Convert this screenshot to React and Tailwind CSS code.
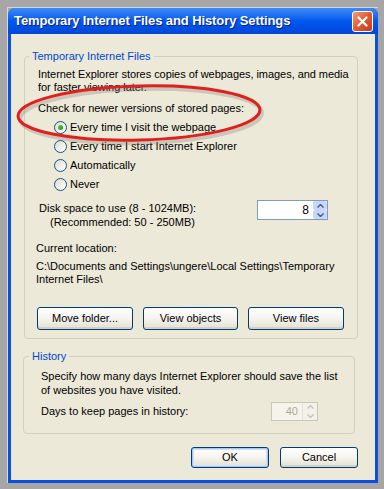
import React from 'react';

const font = { fontFamily: '"Liberation Sans", Arial, sans-serif' };

const Radio = ({ checked, label }) => (
  <div className="flex items-center h-[19px]">
    <span className="w-[13px] h-[13px] rounded-full border border-[#1c5180] bg-gradient-to-br from-[#dcdcd3] to-white flex items-center justify-center">
      {checked && <span className="w-[5px] h-[5px] rounded-full bg-gradient-to-br from-[#55d351] to-[#178f17]" />}
    </span>
    <span className="ml-[3px]">{label}</span>
  </div>
);

const Arrows = ({ disabled }) => (
  <div className={`flex flex-col w-[15px] h-full border-l ${disabled ? 'border-[#e4e2d8]' : 'border-white'}`}>
    <div className={`flex-1 flex items-center justify-center rounded-[2px] ${disabled ? 'bg-[#f2f1ea]' : 'bg-[#c6d6fc]'}`}>
      <svg width="7" height="4" viewBox="0 0 7 4">
        <path d="M0.5 3.5 L3.5 0.5 L6.5 3.5" fill="none" stroke={disabled ? '#c9c7ba' : '#4d6185'} strokeWidth="1.5" />
      </svg>
    </div>
    <div className={`flex-1 flex items-center justify-center rounded-[2px] ${disabled ? 'bg-[#f2f1ea]' : 'bg-[#c6d6fc]'}`}>
      <svg width="7" height="4" viewBox="0 0 7 4">
        <path d="M0.5 0.5 L3.5 3.5 L6.5 0.5" fill="none" stroke={disabled ? '#c9c7ba' : '#4d6185'} strokeWidth="1.5" />
      </svg>
    </div>
  </div>
);

const XpButton = ({ children, className = '', isDefault }) => (
  <button
    className={`rounded-[3px] border border-[#003c74] bg-gradient-to-b from-white via-[#f5f4ef] to-[#e3e0d2] text-black text-[11px] flex items-center justify-center ${isDefault ? 'shadow-[inset_0_0_0_1px_#a8c8f0,inset_0_0_0_2px_#d0e0f8]' : 'shadow-[inset_0_-2px_0_#d6d0c5]'} ${className}`}
  >
    {children}
  </button>
);

export default function App() {
  return (
    <div className="w-[384px] h-[489px] bg-[#a6a6a6] pt-[7px] pl-[7px] overflow-hidden" style={font}>
      <div className="w-[371px] border border-[#d6d6d6] border-r-0 border-b-0">
        <div className="relative w-[370px] rounded-t-[7px] bg-[#0a4fe0] pb-[3px]">
          {/* title bar */}
          <div className="h-[26px] flex items-center justify-between pl-[6px] pr-[5px] rounded-t-[7px] bg-gradient-to-b from-[#3d8af7] via-[#0058ee] to-[#0047d8]">
            <span className="text-white font-bold text-[13px] tracking-[-0.1px] [text-shadow:1px_1px_#0a1f7a]">
              Temporary Internet Files and History Settings
            </span>
            <div className="w-[21px] h-[21px] rounded-[3px] border border-white bg-gradient-to-br from-[#f09a7c] via-[#e05a32] to-[#c33c14] flex items-center justify-center">
              <svg width="11" height="11" viewBox="0 0 11 11">
                <path d="M1.5 1.5 L9.5 9.5 M9.5 1.5 L1.5 9.5" stroke="white" strokeWidth="2.2" strokeLinecap="round" />
              </svg>
            </div>
          </div>

          {/* body */}
          <div className="mx-[3px] bg-[#ece9d8] text-[11px] text-black whitespace-nowrap pt-[16px] pb-[12px] px-[13px]">
            <fieldset className="w-[334px] min-w-0 border border-[#d0d0bf] rounded-[4px] pl-[13px] pr-[4px] pt-[5px] pb-[8px]">
              <legend className="text-[#0046d5] leading-[13px] -ml-[9px] px-[3px]">Temporary Internet Files</legend>
              <p className="leading-[13px] tracking-[-0.05px]">
                Internet Explorer stores copies of webpages, images, and media
                <br />
                for faster viewing later.
              </p>
              <p className="leading-[13px] mt-[8px]">Check for newer versions of stored pages:</p>
              <div className="mt-[3px] ml-[16px]">
                <Radio checked label="Every time I visit the webpage" />
                <Radio label="Every time I start Internet Explorer" />
                <Radio label="Automatically" />
                <Radio label="Never" />
              </div>
              <div className="mt-[7px] flex items-start justify-between pr-[25px] pl-[1px]">
                <div className="leading-[14px]">
                  <div>Disk space to use (8 - 1024MB):</div>
                  <div className="ml-[11px]">(Recommended: 50 - 250MB)</div>
                </div>
                <div className="w-[71px] h-[20px] border border-[#7f9db9] bg-white flex mt-[-1px]">
                  <div className="flex-1 flex items-center justify-end pr-[3px] text-[12px]">8</div>
                  <Arrows />
                </div>
              </div>
              <p className="leading-[13px] mt-[13px] -ml-[2px]">Current location:</p>
              <p className="leading-[13px] mt-[5px] -ml-[2px]">
                C:\Documents and Settings\ungere\Local Settings\Temporary
                <br />
                Internet Files\
              </p>
              <div className="flex gap-[10px] mt-[21px] -ml-[1px]">
                <XpButton className="w-[96px] h-[23px]">Move folder...</XpButton>
                <XpButton className="w-[95px] h-[23px]">View objects</XpButton>
                <XpButton className="w-[96px] h-[23px]">View files</XpButton>
              </div>
            </fieldset>

            <fieldset className="w-[332px] min-w-0 -ml-[1px] mt-[11px] border border-[#d0d0bf] rounded-[4px] pl-[17px] pr-[4px] pt-[6px] pb-[12px]">
              <legend className="text-[#0046d5] leading-[13px] -ml-[12px] px-[3px]">History</legend>
              <p className="leading-[14px]">
                Specify how many days Internet Explorer should save the list
                <br />
                of websites you have visited.
              </p>
              <div className="flex items-center justify-between mt-[5px] pr-[32px]">
                <span>Days to keep pages in history:</span>
                <div className="w-[47px] h-[19px] border border-[#c9c7ba] bg-[#f5f4ea] flex">
                  <div className="flex-1 flex items-center justify-end pr-[4px] text-[11px] text-[#aca899]">40</div>
                  <Arrows disabled />
                </div>
              </div>
            </fieldset>

            <div className="flex justify-end gap-[11px] mt-[13px] pr-[4px]">
              <XpButton isDefault className="w-[78px] h-[21px]">OK</XpButton>
              <XpButton className="w-[78px] h-[21px]">Cancel</XpButton>
            </div>
          </div>

          {/* red annotation ellipse */}
          <svg className="absolute left-[6px] top-[73px] pointer-events-none" width="262" height="76" viewBox="0 0 262 76">
            <ellipse cx="127" cy="35" rx="121" ry="27" transform="rotate(-1.5 127 35)" fill="none" stroke="#7a7a70" strokeOpacity="0.3" strokeWidth="4" />
            <ellipse cx="125" cy="32" rx="121" ry="27" transform="rotate(-1.5 125 32)" fill="none" stroke="#e0201e" strokeWidth="3" />
          </svg>
        </div>
      </div>
    </div>
  );
}
